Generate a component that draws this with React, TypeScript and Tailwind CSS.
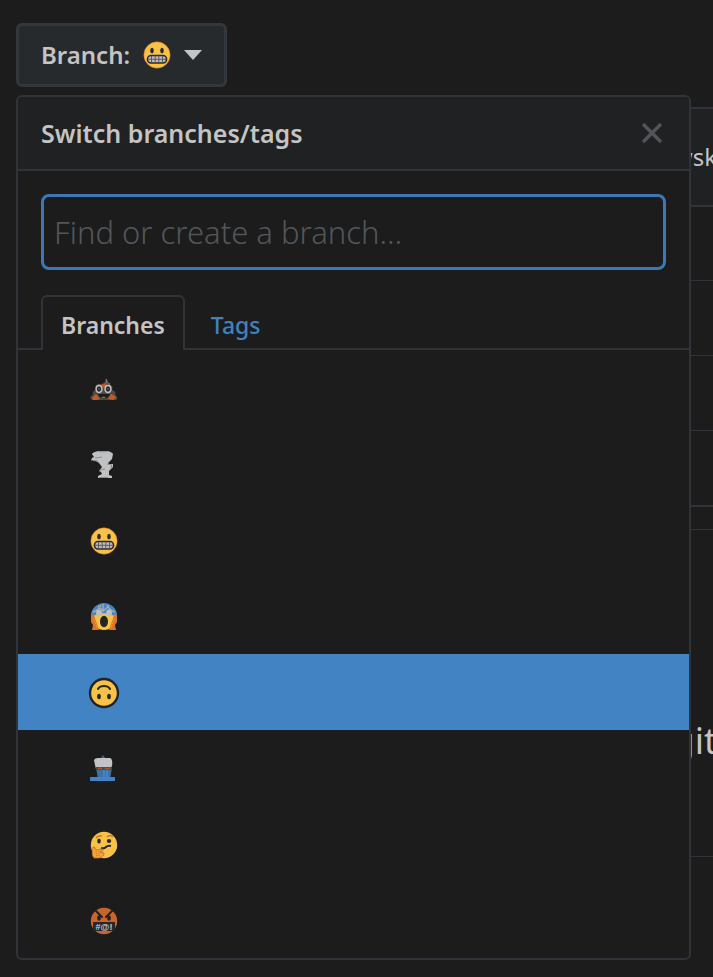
import React from "react";

function Poop() {
  return (
    <svg viewBox="0 0 28 28" className="size-7" aria-hidden="true">
      <path d="M16 3c1 3 4 4 3 7 4 0 4 3 3 5 4 1 4 4 3 5 3 1 3 5 0 5H3c-4-1-3-4 0-5-1-3 1-5 3-5-1-4 0-6 4-6 3 0 6-2 6-6Z" fill="#4e4a48" />
      <path d="M11 10l5-2 1 3-3 2ZM2 23l4-4 4 5-3 1H3ZM25 21l-4-2-3 5 5 1 3-2ZM8 9l3 2-2 1Z" fill="#c65a24" />
      <path d="M16 4l1 4M19 8l1 4" stroke="#858585" strokeWidth="1" fill="none" />
      <ellipse cx="9" cy="14" rx="2.900" ry="3.400" fill="#242424" stroke="#bcbcbc" strokeWidth="1.500" />
      <ellipse cx="18" cy="14" rx="2.900" ry="3.400" fill="#242424" stroke="#bcbcbc" strokeWidth="1.500" />
      <circle cx="9" cy="14" r="0.800" fill="#777" />
      <circle cx="18" cy="14" r="0.800" fill="#777" />
      <path d="M8 19h12c-2 6-10 6-12 0Z" fill="#1c1c1c" />
      <path d="M11 23q3-3 5 0" fill="#d95c22" />
    </svg>
  );
}

function Tornado() {
  return (
    <svg viewBox="0 0 28 28" className="size-7" aria-hidden="true">
      <path d="M2 3q1-2 7-3h8q5 1 6 3l-1 5-4 4 1 1h4v3l-4 4v4l3 1v2H8v-2l4-2-1-2-2-1 3-4-3-4-3-2-5-1 1-2 2-1Z" fill="#bfc1c2" />
      <path d="M9 0.700h8M5 7l7-1M3 9.500l5 0.500M17 13l5 1M10 19l5-1M9 26.500h9" stroke="#928a84" strokeWidth="1" fill="none" />
      <path d="M1.500 8v2M22 14l-1 3" stroke="#427eae" strokeWidth="0.800" />
    </svg>
  );
}

function Grimace() {
  return (
    <svg viewBox="0 0 28 28" className="size-7" aria-hidden="true">
      <circle cx="14" cy="14" r="13.2" fill="#f8c246" stroke="#ce6426" strokeWidth="0.5" />
      <ellipse cx="9" cy="9.5" rx="1.8" ry="2.7" fill="#2b2927" />
      <ellipse cx="19" cy="9.5" rx="1.8" ry="2.7" fill="#2b2927" />
      <rect x="4.500" y="14.500" width="19" height="7.500" rx="3.500" fill="#bcbcbc" stroke="#292929" strokeWidth="1.6" />
      <path d="M5 18.300h18M8.500 15v7M12.200 15v7M15.800 15v7M19.500 15v7" stroke="#555" strokeWidth="0.9" />
    </svg>
  );
}

function Scream() {
  return (
    <svg viewBox="0 0 28 28" className="size-7" aria-hidden="true">
      <circle cx="14" cy="14" r="13" fill="#f8c246" />
      <path d="M1 13a13 13 0 0 1 26 0l-6-1-7-2-8 2Z" fill="#4586c6" />
      <path d="M3 9c5-2 5-2 8-7M25 9c-5-2-5-2-8-7M8 3l5 5 6-5M13 1v8" stroke="#aaa" strokeWidth="1.4" fill="none" />
      <ellipse cx="9" cy="10" rx="3" ry="3.5" fill="#bdbfc1" />
      <ellipse cx="19" cy="10" rx="3" ry="3.5" fill="#bdbfc1" />
      <path d="M1 13q1-3 3-1l3 9 2 6H2l1-5-2-3ZM27 13q-1-3-3-1l-3 9-2 6h7l-1-5 2-3Z" fill="#d87729" />
      <path d="M4 16l3 9M24 16l-3 9" stroke="#f2ad3c" strokeDasharray="1 1" />
      <ellipse cx="14" cy="18.5" rx="4" ry="5.7" fill="#242424" />
    </svg>
  );
}

function UpsideDown() {
  return (
    <svg viewBox="0 0 32 32" className="-mx-0.5 size-8" aria-hidden="true">
      <circle cx="16" cy="16" r="14" fill="#f8c246" stroke="#20242a" strokeWidth="2.4" />
      <path d="M10 12c2-4 10-4 12 0" fill="none" stroke="#292724" strokeWidth="2" strokeLinecap="round" />
      <ellipse cx="11" cy="19.500" rx="1.9" ry="2.8" fill="#2b2927" />
      <ellipse cx="21" cy="19.500" rx="1.9" ry="2.8" fill="#2b2927" />
    </svg>
  );
}

function Cupcake() {
  return (
    <svg viewBox="0 0 28 28" className="size-7" aria-hidden="true">
      <path d="M10 4 13 0l3 4Z" fill="#315f8d" />
      <path d="M6 12h16l-2 13H8Z" fill="#3b72a8" />
      <path d="M14 15v9M17 16v8" stroke="#4483c4" strokeWidth="2" />
      <path d="M4 5q1-2 4-2h12q3 1 2 8l-2 3H6l-1-4Z" fill="#c2c3c4" />
      <path d="M6 12h16v3H6Z" fill="#4c4a48" />
      <path d="M8 14l2-1 2 1M15 13l2 1 3-1" stroke="#b45e2b" strokeWidth="1.2" fill="none" />
      <rect x="0" y="22" width="25" height="4" rx="0.5" fill="#4383c4" />
    </svg>
  );
}

function Thinking() {
  return (
    <svg viewBox="0 0 28 28" className="size-7" aria-hidden="true">
      <circle cx="14" cy="14" r="13.2" fill="#f8c246" />
      <path d="M6 7q2-3 6-2M17 6q3-3 6 0" stroke="#d57029" strokeWidth="1.5" fill="none" />
      <ellipse cx="9" cy="10" rx="1.8" ry="2.6" fill="#2b2927" />
      <ellipse cx="19" cy="10" rx="2.2" ry="2" fill="#2b2927" />
      <path d="M11 17q3 1 5-1t5-1" fill="none" stroke="#292724" strokeWidth="2" />
      <path d="M3 16q2-1 3 3l7-1q2 1-3 3l4 1q0 4-5 5H4q-3-3-1-11Z" fill="#f2a53b" stroke="#c8672a" strokeWidth="0.8" />
      <path d="M6 20l1 6M9 20v6" stroke="#cd6f2a" strokeDasharray="1 1" />
    </svg>
  );
}

function Swearing() {
  return (
    <svg viewBox="0 0 28 28" className="size-7" aria-hidden="true">
      <circle cx="14" cy="14" r="13.2" fill="#c9642a" />
      <path d="M6 4l6 6M22 4l-6 6" stroke="#242322" strokeWidth="2" strokeLinecap="round" />
      <ellipse cx="9" cy="11" rx="1.9" ry="2.7" fill="#242322" />
      <ellipse cx="19" cy="11" rx="1.9" ry="2.7" fill="#242322" />
      <rect x="3" y="15" width="22" height="9" fill="#25282b" />
      <text x="14" y="22.500" textAnchor="middle" fontSize="9" fontWeight="700" fontFamily="Liberation Sans, sans-serif" fill="#c8c8c8">#@!</text>
    </svg>
  );
}

const branches = [
  { name: "poop", Icon: Poop },
  { name: "tornado", Icon: Tornado },
  { name: "grimace", Icon: Grimace },
  { name: "scream", Icon: Scream },
  { name: "upside down", Icon: UpsideDown, active: true },
  { name: "cupcake", Icon: Cupcake },
  { name: "thinking", Icon: Thinking },
  { name: "swearing", Icon: Swearing },
];

function BranchMenu() {
  return (
    <section aria-label="Switch branches/tags" className="absolute inset-x-0 top-full mt-2 rounded-md border-2 border-[#303438] bg-[#1c1c1c]">
      <header className="flex h-[72px] items-center justify-between rounded-t bg-[#202122] px-[23px] text-[#c4c4c4]">
        <h2 className="text-[25px] leading-8 font-semibold">Switch branches/tags</h2>
        <button type="button" aria-label="Close" className="text-[#515458]">
          <svg viewBox="0 0 28 28" className="size-7" fill="none" stroke="currentColor" strokeWidth="3.500" aria-hidden="true">
            <path d="M5 5l18 18M23 5 5 23" />
          </svg>
        </button>
      </header>
      <div className="border-t-2 border-[#303438] px-[23px] pt-[23px]">
        <input
          type="text"
          aria-label="Find or create a branch"
          placeholder="Find or create a branch…"
          className="block h-[76px] w-full rounded-lg border-3 border-[#3d78b4] bg-[#1c1c1c] px-2.5 text-[31px] font-light text-[#c4c4c4] outline-none placeholder:text-[#53565a]"
        />
      </div>
      <div role="tablist" className="mt-[25px] flex border-b-2 border-[#303438] px-[23px]">
        <button type="button" role="tab" aria-selected="true" className="-mb-0.5 h-[55px] rounded-t-md border-2 border-b-0 border-[#303438] bg-[#1c1c1c] px-[18px] pt-1 text-[23px] font-semibold text-[#c4c4c4]">
          Branches
        </button>
        <button type="button" role="tab" aria-selected="false" className="h-[53px] px-[26px] pt-2 text-[23px] font-medium text-[#4281c1]">
          Tags
        </button>
      </div>
      <ul>
        {branches.map(({ name, Icon, active }) => (
          <li key={name}>
            <button type="button" aria-label={name} className={`flex h-[76px] w-full items-center px-[72px] pt-0.5 ${active ? "bg-[#4283c4]" : ""}`}>
              <Icon />
            </button>
          </li>
        ))}
      </ul>
    </section>
  );
}

export default function App() {
  return (
    <main className="min-h-screen overflow-hidden bg-[#1c1c1c] pt-[23px] pb-[120px] pl-4 font-['Noto_Sans','Open_Sans',sans-serif] text-[#c4c4c4]">
      <div className="relative z-10 mr-[22px]">
        <button type="button" className="flex h-16 items-center rounded-md border-3 border-[#32373c] bg-[#272a2d] px-[22px] text-2xl">
          <span className="mr-[13px] font-semibold">Branch:</span>
          <Grimace />
          <svg viewBox="0 0 18 10" className="ml-[13px] h-2.5 w-[18px]" fill="currentColor" aria-hidden="true">
            <path d="M0 0h18L9 10Z" />
          </svg>
        </button>
        <BranchMenu />
      </div>
      <div className="mt-5 border-2 border-r-0 border-[#303438]">
        <div className="flex h-24 items-center justify-end bg-[#202122] text-2xl whitespace-nowrap">
          <span className="-mr-1">wsk</span>
        </div>
        <div className="h-[75px] border-t-2 border-[#303438]" />
        <div className="h-[75px] border-t border-[#303438]" />
        <div className="h-[75px] border-t border-[#303438]" />
        <div className="h-[75px] border-t border-[#303438]" />
      </div>
      <div className="mt-[22px] border-t border-[#303438]">
        <h1 className="flex h-[327px] items-end justify-end border-b border-[#303438] pb-[88px] text-4xl leading-[54px]">
          <span className="-mr-1">git</span>
        </h1>
      </div>
    </main>
  );
}
